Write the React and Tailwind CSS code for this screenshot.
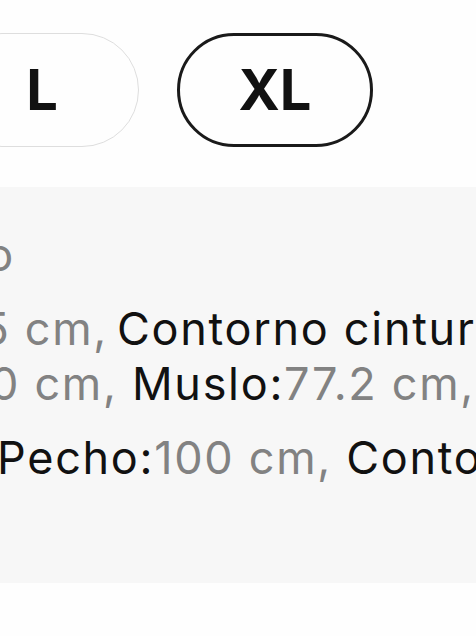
import React from "react";

const G = ({ children }) => <span className="text-[#828282]">{children}</span>;
const B = ({ children }) => <span className="text-[#111111]">{children}</span>;

function Line({ leftWidth, left, right, gap = 0, className = "" }) {
  return (
    <div className={"flex whitespace-nowrap h-[55px] leading-[55px] " + className}>
      <div className="flex justify-end shrink-0 overflow-visible" style={{ width: leftWidth }}>
        <span className="whitespace-pre" style={{ paddingRight: gap }}>{left}</span>
      </div>
      <div className="shrink-0 whitespace-pre">{right}</div>
    </div>
  );
}

export default function App() {
  return (
    <div
      className="w-[476px] h-[636px] overflow-hidden bg-[#fefefe] flex flex-col"
      style={{ fontFamily: "Inter, 'Liberation Sans', sans-serif" }}
    >
      <div className="h-[187px] shrink-0 pt-[33px]">
        <div className="flex gap-[38px] ml-[-55px]">
          <div className="w-[194px] h-[114px] shrink-0 rounded-full border-[1.5px] border-[#dedede] flex items-center justify-center">
            <span className="text-[56px] leading-none font-bold text-[#111]">L</span>
          </div>
          <div className="w-[196px] h-[114px] shrink-0 rounded-full border-[3px] border-[#1a1a1a] flex items-center justify-center">
            <span className="text-[56px] leading-none font-bold text-[#111]">XL</span>
          </div>
        </div>
      </div>
      <div className="h-[396px] shrink-0 bg-[#f7f7f7] pt-[40px] text-[45px] tracking-[1.7px] overflow-hidden">
        <Line leftWidth={15} left={<G>Información del modelo</G>} right={null} />
        <Line
          className="mt-[19px]"
          leftWidth={117}
          gap={9}
          left={<><B>Cadera:</B><G>95 cm,</G></>}
          right={<><B>Contorno cintura:</B><G>72 cm,</G></>}
        />
        <Line
          leftWidth={132}
          left={<><B>Contorno de cadera:</B><G>100 cm,{"\u00a0"}</G></>}
          right={<><B>Muslo:</B><G>77.2 cm,</G></>}
        />
        <Line
          className="mt-[19px] ml-[-3px]"
          leftWidth={0}
          left={null}
          right={<><B>Pecho:</B><G>100 cm, </G><B>Contorno de brazo:</B><G>32 cm,</G></>}
        />
      </div>
      <div className="flex-1 bg-[#fefefe]" />
    </div>
  );
}
